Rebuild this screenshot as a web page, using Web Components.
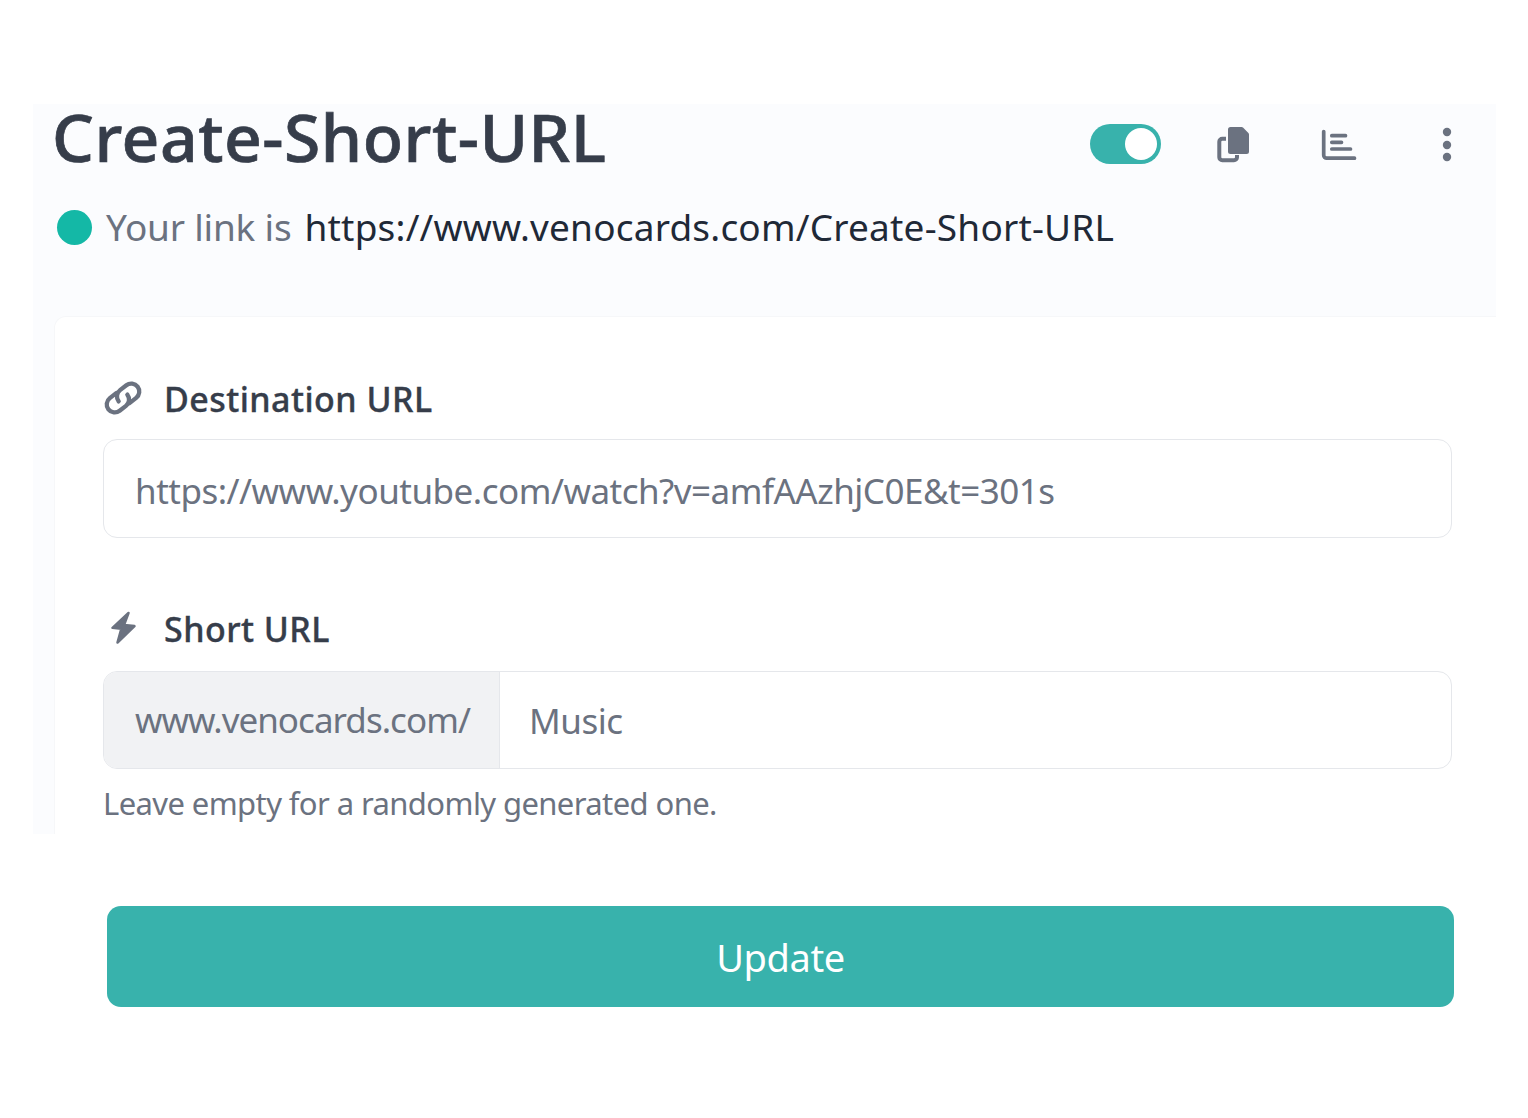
<!DOCTYPE html>
<html><head><meta charset="utf-8"><style>
html,body{margin:0;padding:0;background:#fff}
body{font-family:"Noto Sans","Open Sans",sans-serif;width:1528px;height:1118px;overflow:hidden}
</style></head><body>
<template id="t-page"><style>
:host{display:block;padding-top:104px;box-sizing:border-box;height:1118px}
.panel{margin-left:33px;width:1463px;height:730px;background:#fbfcfe;overflow:hidden;box-sizing:border-box;padding-left:21px}
.foot{margin:72px 0 0 107px;width:1347px}
</style><div class="panel"><slot name="head"></slot><slot name="card"></slot></div><div class="foot"><slot name="foot"></slot></div></template>

<template id="t-head"><style>
:host{display:block;height:212px;color:#374151}
.top{display:flex;align-items:center;height:72px}
h1{margin:0 0 0 -2px;font-size:66px;line-height:72px;font-weight:500;-webkit-text-stroke:.7px #363d4a;letter-spacing:.5px;color:#363d4a;flex:1;white-space:nowrap;position:relative;top:-4px}
.tools{display:flex;align-items:center;margin-right:42px;margin-top:8px}
.link{display:flex;align-items:center;margin:30px 0 0 3px;height:40px;font-size:37px;letter-spacing:-.2px;white-space:nowrap;color:#6b7280}
.dot{width:35px;height:35px;border-radius:50%;background:#14b8a6;margin-right:14px;flex:none;position:relative;top:1px}
.link b{font-weight:400;color:#1f2937;margin-left:13px;letter-spacing:.2px}
</style><div class="top"><h1><slot name="title"></slot></h1><div class="tools"><slot name="tools"></slot></div></div>
<div class="link"><span class="dot"></span><span>Your link is</span><b><slot name="url"></slot></b></div></template>

<template id="t-toggle"><style>
:host{display:block;width:71px;height:40px;border-radius:20px;background:#38b2ac;position:relative}
i{position:absolute;right:4px;top:4px;width:32px;height:32px;border-radius:50%;background:#fff}
</style><i></i></template>

<template id="t-card"><style>
:host{display:block;background:#fff;border:1px solid #f6f7f9;border-right:0;border-radius:12px 0 0 0;box-sizing:border-box;height:520px;padding:60px 44px 0 48px}
</style><slot></slot></template>

<template id="t-field"><style>
:host{display:block}
.lab{display:flex;align-items:center;height:44px;font-size:34px;font-weight:500;-webkit-text-stroke:.35px #363d4a;letter-spacing:.45px;color:#363d4a;white-space:nowrap}
.ic{width:40px;height:40px;margin-right:21px;flex:none;display:flex;align-items:center;justify-content:center}
.box{margin-top:var(--gap,18px)}
</style><div class="lab"><span class="ic"><slot name="icon"></slot></span><slot name="label"></slot></div><div class="box"><slot></slot></div></template>

<template id="t-input"><style>
:host{display:flex;box-sizing:border-box;width:1349px;border:1px solid #e5e7eb;border-radius:14px;background:#fff;overflow:hidden;font-size:35px;letter-spacing:-.5px;color:#6b7280;white-space:nowrap}
.pre{display:none;align-items:center;background:#f1f2f4;border-right:1px solid #e5e7eb;box-sizing:border-box;width:396px;padding:0 0 2px 31px;letter-spacing:-.97px}
:host([prefixed]) .pre{display:flex}
.val{display:flex;align-items:center;padding-left:var(--pad,31px);padding-top:var(--top,0);flex:1}
</style><div class="pre"><slot name="prefix"></slot></div><div class="val"><slot></slot></div></template>

<template id="t-btn"><style>
:host{display:flex;align-items:center;justify-content:center;height:101px;border-radius:14px;background:#38b2ac;color:#fff;font-size:38px;letter-spacing:-.4px;box-sizing:border-box}
</style><slot></slot></template>

<script>
for (const [n,id] of [["app-page","t-page"],["app-head","t-head"],["app-toggle","t-toggle"],["app-card","t-card"],["app-field","t-field"],["app-input","t-input"],["app-btn","t-btn"]]) {
  customElements.define(n, class extends HTMLElement {
    constructor(){super();this.attachShadow({mode:"open"}).appendChild(document.getElementById(id).content.cloneNode(true));}
  });
}
</script>

<app-page>
  <app-head slot="head">
    <span slot="title">Create-Short-URL</span>
    <app-toggle slot="tools"></app-toggle>
    <svg slot="tools" width="36" height="40" viewBox="0 0 36 40" style="margin-left:55px;display:block"><path fill="#6b7280" d="M14.500 3h11a2 2 0 0 1 1.500.6l5.400 5.400a2 2 0 0 1 .6 1.500v17a2.500 2.500 0 0 1-2.500 2.500h-16a2.500 2.500 0 0 1-2.500-2.500V5.500a2.500 2.500 0 0 1 2.500-2.500z"/><path d="M10 14.700H6.300a3 3 0 0 0-3 3v15.600a3 3 0 0 0 3 3H18a3 3 0 0 0 3-3V31" fill="none" stroke="#6b7280" stroke-width="4"/></svg>
    <svg slot="tools" width="38" height="40" viewBox="0 0 38 40" style="margin-left:68px;display:block" fill="none" stroke="#6b7280" stroke-linecap="round"><path d="M3.700 7.500v23.700a3 3 0 0 0 3 3H34.500" stroke-width="3.700"/><path d="M11.800 11.700H25.500M11.800 18.300H21.500M11.800 25H30.500" stroke-width="3.700"/></svg>
    <svg slot="tools" width="14" height="40" viewBox="0 0 14 40" style="margin-left:82px;display:block" fill="#6b7280"><circle cx="7" cy="8" r="4.200"/><circle cx="7" cy="21" r="4.200"/><circle cx="7" cy="33" r="4.200"/></svg>
    <span slot="url">https://www.venocards.com/Create-Short-URL</span>
  </app-head>
  <app-card slot="card">
    <app-field>
      <svg slot="icon" width="40" height="32" viewBox="0 0 40 32" style="margin-top:-3px;overflow:visible" fill="none" stroke="#6b7280" stroke-width="4.300" stroke-linecap="round"><g transform="rotate(-38 20 16)"><path d="M18 8H9.500a8 8 0 0 0 0 16h8a8 8 0 0 0 8-8"/><path d="M22 24h8.500a8 8 0 0 0 0-16h-8a8 8 0 0 0-8 8"/></g></svg>
      <span slot="label">Destination URL</span>
      <app-input style="height:99px;--top:4px">https://www.youtube.com/watch?v=amfAAzhjC0E&amp;t=301s</app-input>
    </app-field>
    <app-field style="margin-top:69px;--gap:20px">
      <svg slot="icon" width="27" height="34" viewBox="0 0 27 34" style="margin-top:-2px" fill="#6b7280" stroke="#6b7280" stroke-width="2.500" stroke-linejoin="round"><path d="M18.500 2L2.500 16.800l8.800 1L7.500 31.500 24.500 15l-10.500-1z"/></svg>
      <span slot="label">Short URL</span>
      <app-input prefixed style="height:98px;--pad:29px"><span slot="prefix">www.venocards.com/</span>Music</app-input>
    </app-field>
    <div style="margin-top:14px;font-size:31px;letter-spacing:-.6px;color:#6b7280;white-space:nowrap;line-height:40px">Leave empty for a randomly generated one.</div>
  </app-card>
  <app-btn slot="foot">Update</app-btn>
</app-page>
</body></html>
